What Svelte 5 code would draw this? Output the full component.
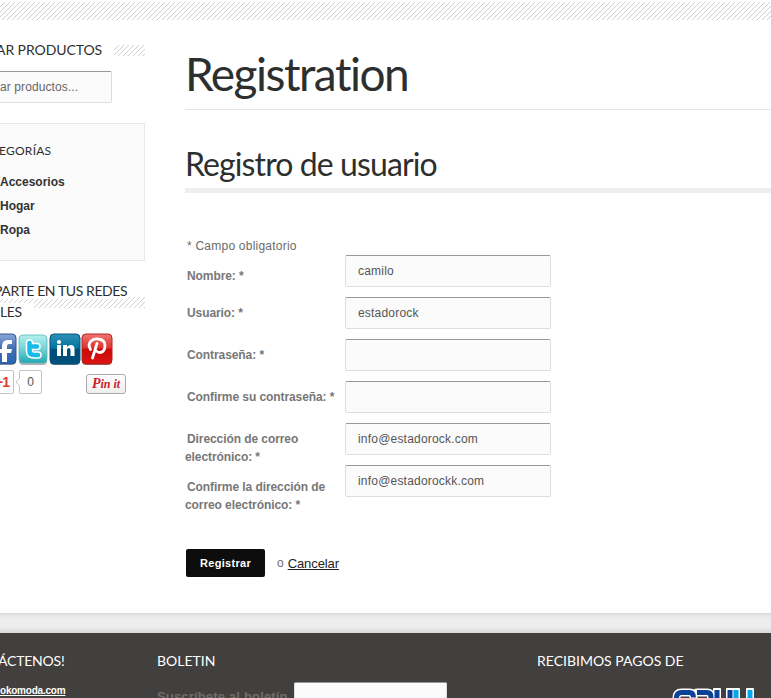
<script lang="ts">
	interface Field {
		label: string;
		value: string;
		type?: string;
		offset?: boolean;
	}

	const categories = ['Accesorios', 'Hogar', 'Ropa'];

	let fields: Field[] = $state([
		{ label: 'Nombre: *', value: 'camilo', offset: true },
		{ label: 'Usuario: *', value: 'estadorock' },
		{ label: 'Contraseña: *', value: '', type: 'password' },
		{ label: 'Confirme su contraseña: *', value: '', type: 'password' },
		{ label: 'Dirección de correo electrónico: *', value: 'info@estadorock.com' },
		{ label: 'Confirme la dirección de correo electrónico: *', value: 'info@estadorockk.com', offset: true }
	]);
</script>

{#snippet hatch(id: string)}
	<svg class="hatch" width="100%" height="100%" aria-hidden="true">
		<defs>
			<pattern {id} width="5" height="5" patternUnits="userSpaceOnUse">
				<path d="M4 0h1v1h-1zM3 1h1v1h-1zM2 2h1v1h-1zM1 3h1v1h-1zM0 4h1v1h-1z" fill="#cfcfcf" shape-rendering="crispEdges" />
			</pattern>
		</defs>
		<rect width="100%" height="100%" fill="url(#{id})" />
	</svg>
{/snippet}

<div class="page">
	<div class="top-strip">{@render hatch('hatch-top')}</div>

	<div class="columns">
		<aside class="sidebar">
			<div class="search-title">
				<h3>AR PRODUCTOS</h3>
				<div class="title-hatch">{@render hatch('hatch-search')}</div>
			</div>
			<div class="search-box">ar productos...</div>

			<nav class="categories">
				<h4>EGORÍAS</h4>
				<ul>
					{#each categories as category}
						<li>{category}</li>
					{/each}
				</ul>
			</nav>

			<div class="share-title">
				<div class="share-hatch">{@render hatch('hatch-share')}</div>
				<h3><span class="line">PARTE EN TUS REDES</span><br /><span class="line last">LES</span></h3>
			</div>

			<div class="social">
				<svg width="32" height="34" viewBox="0 0 32 34">
					<defs>
						<linearGradient id="fb" x2="0" y2="1"><stop offset="0" stop-color="#8ba8da" /><stop offset=".45" stop-color="#4770b5" /><stop offset="1" stop-color="#2866af" /></linearGradient>
					</defs>
					<rect x="1" y="2" width="30" height="30" rx="4" fill="#777" opacity=".5" />
					<rect x="1" y="1" width="30" height="30" rx="4" fill="url(#fb)" stroke="#35568b" />
					<path d="M17 29V20h-3v-4h3v-3q0-6 6-6h4v4h-3q-2 0-2 2v3h5l-1 4h-4v9z" fill="#fff" />
				</svg>
				<svg width="32" height="34" viewBox="0 0 32 34">
					<defs>
						<linearGradient id="tw" x2="0" y2="1"><stop offset="0" stop-color="#b5f0ef" /><stop offset=".5" stop-color="#75d1d5" /><stop offset="1" stop-color="#21a9b1" /></linearGradient>
					</defs>
					<rect x="2" y="3" width="28" height="29" rx="4" fill="#666" opacity=".5" />
					<rect x="2" y="2" width="28" height="28" rx="4" fill="url(#tw)" stroke="#5eb5b9" stroke-width=".8" />
					<path d="M12.500 10v8q0 4 4.500 4h4M12.500 13.500h7.500" fill="none" stroke="#fff" stroke-width="7.500" stroke-linecap="round" stroke-linejoin="round" />
					<path d="M12.500 10v8q0 4 4.500 4h4M12.500 13.500h7.500" fill="none" stroke="#16bce8" stroke-width="4.500" stroke-linecap="round" stroke-linejoin="round" />
				</svg>
				<svg width="32" height="34" viewBox="0 0 32 34">
					<defs>
						<linearGradient id="li" x2="0" y2="1"><stop offset="0" stop-color="#2f91b7" /><stop offset=".48" stop-color="#00729d" /><stop offset=".52" stop-color="#004c77" /><stop offset="1" stop-color="#00517d" /></linearGradient>
					</defs>
					<rect x="1" y="2" width="30" height="30" rx="4" fill="#555" opacity=".7" />
					<rect x="1" y="1" width="30" height="30" rx="4" fill="url(#li)" stroke="#00567d" />
					<path d="M8 12h4v11H8zM14 12h4v2q1.500-2 4-2 3.500 0 3.500 4v7h-4v-6q0-2-1.500-2-2 0-2 2v6h-4z" fill="#fff" />
					<circle cx="10" cy="9" r="2.100" fill="#fff" />
				</svg>
				<svg width="32" height="34" viewBox="0 0 32 34">
					<defs>
						<linearGradient id="pi" x2="0" y2="1"><stop offset="0" stop-color="#ee7771" /><stop offset=".46" stop-color="#df332e" /><stop offset=".52" stop-color="#cb0808" /><stop offset="1" stop-color="#dc1513" /></linearGradient>
					</defs>
					<rect x="1" y="2" width="30" height="30" rx="4" fill="#555" opacity=".7" />
					<rect x="1" y="1" width="30" height="30" rx="4" fill="url(#pi)" stroke="#b5201d" />
					<path d="M9.500 16.500q-3-5 .5-8.500 3-2.500 7-2 7 .8 7 6.500 0 6.500-5 7-2.500 0-3.500-1.500M16 10.500l-4.500 14.500" fill="none" stroke="#fff" stroke-width="2.800" stroke-linecap="round" />
				</svg>
			</div>

			<div class="counters">
				<div class="plus-one">+1</div>
				<svg class="pointer" width="5" height="10" viewBox="0 0 5 10"><path d="M5 .5L1 5l4 4.500" fill="#fff" stroke="#c4c4c4" /></svg>
				<div class="bubble">0</div>
				<div class="pin-it"><span class="p">P</span>in it</div>
			</div>
		</aside>

		<main>
			<h1>Registration</h1>
			<h2>Registro de usuario</h2>

			<form>
				<p class="required">* Campo obligatorio</p>
				{#each fields as field, i}
					<div class="row">
						<label for="field-{i}" class:offset={field.offset}>{field.label}</label>
						<input id="field-{i}" type={field.type ?? 'text'} bind:value={field.value} />
					</div>
				{/each}
				<div class="actions">
					<button type="button">Registrar</button>
					<span class="or">o</span>
					<a href="#cancelar">Cancelar</a>
				</div>
			</form>
		</main>
	</div>

	<div class="divider"></div>

	<footer>
		<section class="contact">
			<h5>ÁCTENOS!</h5>
			<a href="#contacto">okomoda.com</a>
		</section>
		<section class="newsletter">
			<h5>BOLETIN</h5>
			<div class="subscribe">
				<span>Suscríbete al boletín</span>
				<input type="text" aria-label="Correo" />
			</div>
		</section>
		<section class="payments">
			<h5>RECIBIMOS PAGOS DE</h5>
			<svg width="84" height="26" viewBox="0 0 84 26">
				<g fill="none" stroke-linejoin="round">
					<path d="M4.500 26V10q0-5.500 5-5.500h8q4 0 4 5M25 4.500h10q4 0 4 4.500v17M45 2v24M58 2v24M64 2v24M78 2v24" stroke="#fff" stroke-width="8" stroke-linecap="round" />
					<path d="M4.500 26V10q0-5.500 5-5.500h8q4 0 4 5M25 4.500h10q4 0 4 4.500v17M45 2v24M58 2v24" stroke="#0b4298" stroke-width="5" />
					<path d="M64 2v24M78 2v24" stroke="#00a8f0" stroke-width="5" />
				</g>
			</svg>
		</section>
	</footer>
</div>

<style>
	:global(body) {
		margin: 0;
		background: #fff;
	}

	.page {
		width: 771px;
		height: 698px;
		overflow: hidden;
		display: flex;
		flex-direction: column;
		font-family: 'Liberation Sans', Arial, sans-serif;
		font-size: 12px;
		color: #6b6b6b;
	}

	h1, h2, h3, h4, h5, p, ul {
		margin: 0;
		padding: 0;
		font-weight: 400;
	}

	h1, h2, h3, h4, h5 {
		font-family: Lato, sans-serif;
		font-variant-ligatures: none;
		color: #2d2f2f;
		white-space: nowrap;
	}

	.hatch {
		display: block;
	}

	.top-strip {
		height: 18px;
		padding-top: 2px;
	}

	.columns {
		display: grid;
		grid-template-columns: 145px 586px;
		column-gap: 40px;
		height: 593px;
	}

	/* Sidebar */
	.sidebar {
		min-width: 0;
	}

	.search-title {
		display: flex;
		justify-content: space-between;
		align-items: center;
		height: 21px;
		margin-top: 20px;
	}

	h3 {
		font-size: 14px;
		line-height: 21px;
		margin-left: -4px;
	}

	.search-title h3 {
		padding-bottom: 2px;
		letter-spacing: -0.08px;
	}

	.title-hatch {
		width: 31px;
		height: 11px;
	}

	.search-box {
		box-sizing: border-box;
		width: 112px;
		height: 32px;
		margin-top: 10px;
		border: 1px solid #ddd;
		border-left: 0;
		border-top-color: #999;
		border-radius: 0 2px 2px 0;
		background: #fbfbfb;
		line-height: 30px;
		letter-spacing: 0.1px;
		color: #666;
	}

	.categories {
		box-sizing: border-box;
		height: 138px;
		margin-top: 20px;
		padding-top: 17px;
		border: 1px solid #e8e8e8;
		border-left: 0;
		background: #fbfbfb;
	}

	h4 {
		font-size: 12px;
		line-height: 20px;
		letter-spacing: 0.25px;
		margin-left: -1px;
	}

	ul {
		list-style: none;
		margin-top: 9px;
	}

	li {
		line-height: 24px;
		font-weight: 700;
		color: #333;
	}

	.share-title {
		position: relative;
		margin-top: 19px;
	}

	.share-hatch {
		position: absolute;
		left: 0;
		top: 17px;
		width: 145px;
		height: 11px;
	}

	.share-title h3 {
		position: relative;
		margin-left: -6px;
		letter-spacing: -0.4px;
	}

	.line {
		background: #fff;
	}

	.line.last {
		padding-right: 12px;
		margin-left: 6px;
	}

	.social {
		display: flex;
		margin: 11px 0 0 -15px;
	}

	.counters {
		display: flex;
		align-items: flex-start;
		margin-top: 3px;
	}

	.plus-one,
	.bubble {
		box-sizing: border-box;
		height: 24px;
		border: 1px solid #c4c4c4;
		border-radius: 2px;
		text-align: center;
		line-height: 23px;
		background: #fff;
	}

	.plus-one {
		width: 22px;
		margin-left: -8px;
		padding-right: 2px;
		color: #e0402f;
		font-weight: 700;
		font-size: 14px;
		letter-spacing: -1px;
	}

	.pointer {
		margin: 7px -1px 0 1px;
		z-index: 1;
	}

	.bubble {
		width: 23px;
		color: #555;
		font-size: 12px;
	}

	.pin-it {
		box-sizing: border-box;
		width: 40px;
		height: 20px;
		margin: 4px 0 0 44px;
		border: 1px solid #aaa;
		border-radius: 3px;
		background: linear-gradient(#fff, #eee);
		color: #cb2027;
		font: italic 700 12px/17px 'Liberation Serif', serif;
		text-align: center;
		white-space: nowrap;
	}

	.pin-it .p {
		font-size: 14px;
	}

	/* Main */
	h1 {
		height: 89px;
		font-size: 46px;
		line-height: 107px;
		letter-spacing: -1.5px;
		border-bottom: 1px solid #e4e4e4;
	}

	h2 {
		box-sizing: border-box;
		height: 83px;
		font-size: 32px;
		line-height: 108px;
		letter-spacing: -0.9px;
		border-bottom: 5px solid #eee;
	}

	.required {
		padding: 44px 0 0 2px;
		height: 18px;
		line-height: 18px;
		letter-spacing: 0.23px;
	}

	.row {
		display: grid;
		grid-template-columns: 160px 206px;
		height: 42px;
	}

	label {
		padding-top: 7px;
		line-height: 18px;
		font-weight: 700;
		letter-spacing: -0.08px;
		text-indent: 2px;
		color: #777;
	}

	label.offset {
		padding-top: 12px;
	}

	.row:nth-of-type(6) label {
		padding-top: 13px;
	}

	input {
		box-sizing: border-box;
		height: 32px;
		padding: 0 12px;
		border: 1px solid #ddd;
		border-top-color: #999;
		border-radius: 2px;
		background: #fbfbfb;
		font: 12px 'Liberation Sans', Arial, sans-serif;
		letter-spacing: 0.2px;
		color: #555;
		outline: none;
	}

	.actions {
		display: flex;
		align-items: center;
		margin: 42px 0 0 1px;
	}

	button {
		width: 79px;
		height: 28px;
		padding: 0;
		border: 0;
		border-radius: 2px;
		background: #0d0d0d;
		color: #fff;
		font: 700 11px 'Liberation Sans', Arial, sans-serif;
		letter-spacing: 0.3px;
	}

	.or {
		margin: 0 4px 0 12px;
	}

	.actions a {
		color: #222;
		font-size: 13px;
		letter-spacing: -0.1px;
	}

	/* Footer */
	.divider {
		height: 20px;
		background: linear-gradient(#d8d8d8, #e7e7e7 3px, #ededed 6px, #ededed 14px, #d8d8d8);
	}

	footer {
		display: grid;
		grid-template-columns: 157px 380px 234px;
		flex: 1;
		min-height: 0;
		background: #42403e;
	}

	h5 {
		height: 20px;
		padding-top: 18px;
		font-size: 14px;
		line-height: 20px;
		color: #fff;
	}

	.contact h5 {
		margin-left: -2px;
		letter-spacing: -0.2px;
	}

	.contact a {
		display: block;
		margin-top: 13px;
		font-size: 10px;
		font-weight: 700;
		line-height: 14px;
		letter-spacing: -0.22px;
		color: #fff;
	}

	.subscribe {
		display: flex;
		margin-top: 11px;
		font-size: 13px;
		font-weight: 700;
		line-height: 29px;
		letter-spacing: 0.17px;
		white-space: nowrap;
		color: #6f6d6b;
	}

	.subscribe span {
		width: 137px;
	}

	.subscribe input {
		width: 153px;
	}

	.payments svg {
		display: block;
		margin: 17px 0 0 135px;
	}
</style>
